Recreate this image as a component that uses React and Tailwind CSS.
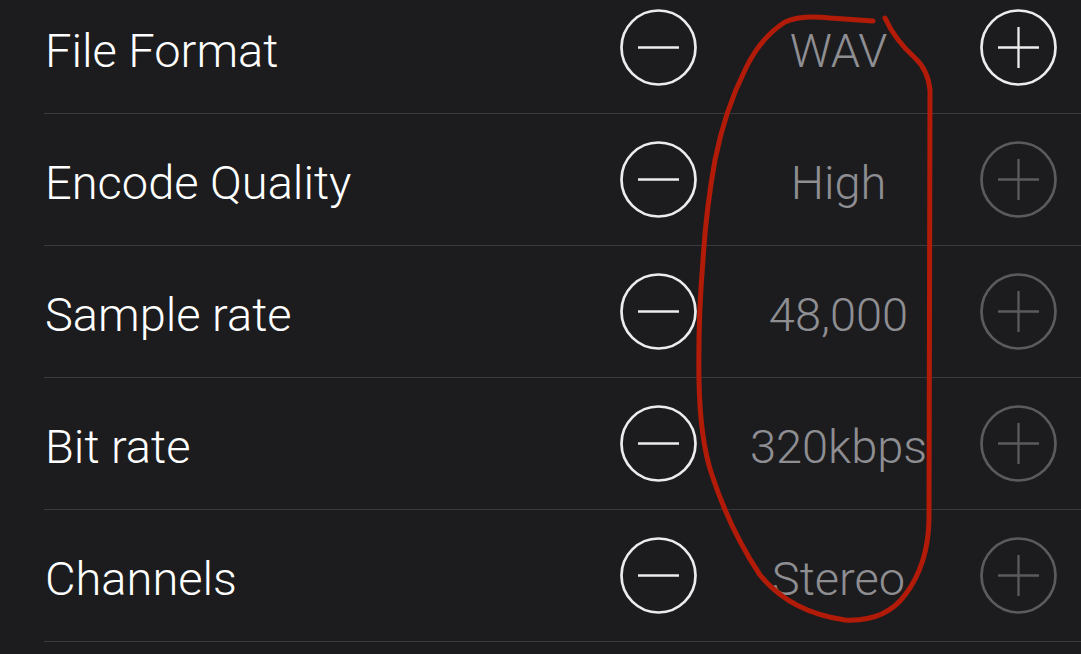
import React from 'react';

const rows = [
  { label: 'File Format', value: 'WAV', canInc: true },
  { label: 'Encode Quality', value: 'High', canInc: false },
  { label: 'Sample rate', value: '48,000', canInc: false },
  { label: 'Bit rate', value: '320kbps', canInc: false },
  { label: 'Channels', value: 'Stereo', canInc: false },
];

function RoundButton({ plus, enabled }) {
  const color = enabled ? '#ececec' : '#5b5b5e';
  return (
    <button className="w-[77px] h-[77px] shrink-0 flex items-center justify-center">
      <svg width="77" height="77" viewBox="0 0 77 77" fill="none" stroke={color} strokeWidth="2.7">
        <circle cx="38.5" cy="38.5" r="37" />
        <line x1="18" y1="38.5" x2="59" y2="38.5" strokeWidth="2.3" />
        {plus && <line x1="38.5" y1="18" x2="38.5" y2="59" strokeWidth="2.3" />}
      </svg>
    </button>
  );
}

export default function App() {
  return (
    <div
      className="relative w-[1081px] h-[654px] overflow-hidden bg-[#1c1c1e]"
      style={{ fontFamily: 'Roboto, "Liberation Sans", sans-serif' }}
    >
      <div className="-mt-[18px]">
        {rows.map((r) => (
          <div key={r.label} className="pl-[44px]">
            <div className="flex items-center h-[131px] pr-[24px]">
              <div className="flex-1 pl-[1px] pt-[8px] text-[47px] font-light text-white">{r.label}</div>
              <RoundButton plus={false} enabled />
              <div className="w-[283px] pt-[8px] text-center text-[47px] font-light text-[#8e8e93]">{r.value}</div>
              <RoundButton plus enabled={r.canInc} />
            </div>
            <div className="h-px bg-[#3a3a3d]" />
          </div>
        ))}
      </div>

      {/* hand-drawn red annotation */}
      <svg className="absolute inset-0 pointer-events-none" width="1081" height="654" viewBox="0 0 1081 654" fill="none">
        <path
          d="M873 21 L830 18 Q800 15 785 22 Q760 38 745 70 Q725 110 715 160 Q706 210 703 260 Q698 320 699 380 Q700 440 712 475 Q730 530 760 575 Q790 612 845 620 Q885 622 905 595 Q928 565 929 520 L930 90 Q928 70 915 58 Q895 40 885 18"
          stroke="#b31b09"
          strokeWidth="5"
          strokeLinecap="round"
          strokeLinejoin="round"
        />
      </svg>
    </div>
  );
}
